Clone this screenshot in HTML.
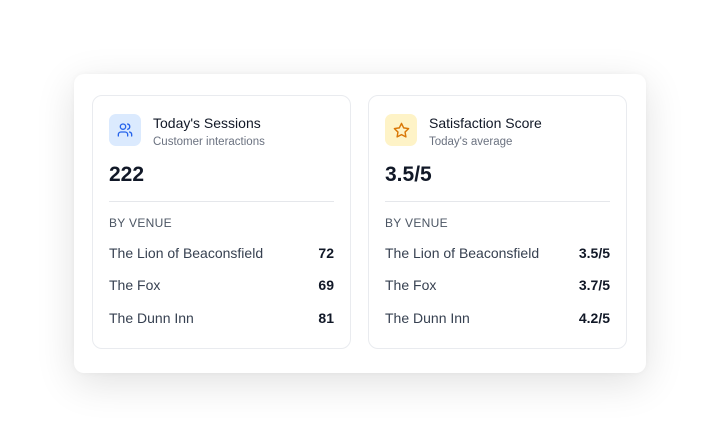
<!DOCTYPE html><html><head><style>
*{margin:0;padding:0;box-sizing:border-box}
body{width:720px;height:448px;background:#fff;font-family:"Liberation Sans",sans-serif;position:relative;overflow:hidden}
.outer{position:absolute;left:74px;top:74px;width:572px;height:299px;background:#fff;border-radius:10px;box-shadow:0 10px 40px rgba(0,0,0,.12),0 0 6px rgba(0,0,0,.04)}
.card{position:absolute;top:95px;width:259px;height:254px;border:1px solid #e9ebef;border-radius:10px;background:#fff}
.ic{position:absolute;left:16px;top:18px;width:32px;height:32px;border-radius:7px;display:flex;align-items:center;justify-content:center}
.t{position:absolute;left:60px;top:19px;font-size:14px;color:#111827}
.s{position:absolute;left:60px;top:40px;font-size:11.5px;color:#6b7280}
.n{position:absolute;left:16px;top:67px;font-size:21px;font-weight:bold;color:#111827}
.d{position:absolute;left:16px;right:16px;top:105px;border-top:1px solid #e5e7eb}
.bv{position:absolute;left:16px;top:120px;font-size:12px;color:#4b5563;letter-spacing:.3px}
.r{position:absolute;left:16px;right:16px;font-size:14px;color:#374151;display:flex;justify-content:space-between}
.r b{color:#111827;font-weight:600}
</style></head><body>
<div class="outer"></div>
<div class="card" style="left:92px">
<div class="ic" style="background:#dbeafe"><svg width="16" height="16" viewBox="0 0 24 24" fill="none" stroke="#2563eb" stroke-width="2" stroke-linecap="round"><circle cx="9" cy="7" r="4"/><path d="M2 21v-2a4 4 0 0 1 4-4h6a4 4 0 0 1 4 4v2M16 3.1a4 4 0 0 1 0 7.8M22 21v-2a4 4 0 0 0-3-3.9"/></svg></div>
<div class="t">Today's Sessions</div><div class="s">Customer interactions</div>
<div class="n">222</div><div class="d"></div><div class="bv">BY VENUE</div>
<div class="r" style="top:149px"><span>The Lion of Beaconsfield</span><b>72</b></div>
<div class="r" style="top:181px"><span>The Fox</span><b>69</b></div>
<div class="r" style="top:214px"><span>The Dunn Inn</span><b>81</b></div>
</div>
<div class="card" style="left:368px">
<div class="ic" style="background:#fef3c7"><svg width="17" height="17" viewBox="0 0 24 24" fill="none" stroke="#d97706" stroke-width="2" stroke-linejoin="round"><path d="M12 2l3.1 6.3 6.9 1-5 4.9 1.2 6.8L12 17.8 5.8 21l1.2-6.8-5-4.9 6.9-1z"/></svg></div>
<div class="t">Satisfaction Score</div><div class="s">Today's average</div>
<div class="n">3.5/5</div><div class="d"></div><div class="bv">BY VENUE</div>
<div class="r" style="top:149px"><span>The Lion of Beaconsfield</span><b>3.5/5</b></div>
<div class="r" style="top:181px"><span>The Fox</span><b>3.7/5</b></div>
<div class="r" style="top:214px"><span>The Dunn Inn</span><b>4.2/5</b></div>
</div>
</body></html>
